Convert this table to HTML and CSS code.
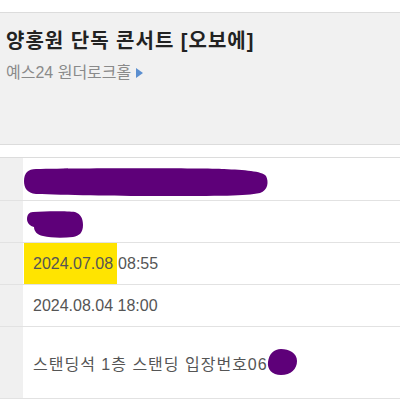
FILE: index.html
```html
<!DOCTYPE html>
<html lang="ko">
<head>
<meta charset="utf-8">
<link rel="stylesheet" href="styles.css">
</head>
<body>
<section class="summary">
  <h1 class="title">양홍원 단독 콘서트 [오보에]</h1>
  <p class="venue">예스24 원더로크홀<svg class="arrow" width="7" height="10" viewBox="0 0 7 10"><path d="M0 0 L7 5 L0 10 Z" fill="#5b8fd0"/></svg></p>
</section>
<div class="table">
  <div class="row r1">
    <div class="th"></div>
    <div class="td"><svg class="blob b1" width="245" height="29" viewBox="0 0 245 29"><path d="M12 1 C60 0 180 0 200 1 C220 2 238 3 242 8 C245 14 244 22 236 25 C220 28 200 28 130 28 C90 28 40 27 12 26 C3 25 0 20 0 13 C0 5 4 1 12 1 Z" fill="#5e0079"/></svg></div>
  </div>
  <div class="row">
    <div class="th"></div>
    <div class="td"><svg class="blob b2" width="57" height="27" viewBox="0 0 57 27"><path d="M6 1 C20 0 40 0 48 1 C54 3 56 8 56 14 C56 22 52 25 46 26 C36 27 24 27 16 25 C10 24 7 20 7 16 C3 15 0 12 0 8 C0 4 2 1 6 1 Z" fill="#5e0079"/></svg></div>
  </div>
  <div class="row">
    <div class="th"></div>
    <div class="td"><span class="mark">2024.07.08</span><span class="time">08:55</span></div>
  </div>
  <div class="row">
    <div class="th"></div>
    <div class="td">2024.08.04 18:00</div>
  </div>
  <div class="row tall">
    <div class="th"></div>
    <div class="td"><span class="seat">스탠딩석 1층 스탠딩 입장번호06</span><svg class="blob b3" width="31" height="27" viewBox="0 0 31 27"><path d="M14 0 C22 0 30 4 30 12 C30 20 24 26 14 26 C5 26 0 20 1 13 C2 5 7 0 14 0 Z" fill="#5e0079"/></svg></div>
  </div>
</div>
</body>
</html>
```

FILE: styles.css
```css
html, body {
  margin: 0;
  padding: 0;
  background: #fff;
}
body {
  font-family: "Liberation Sans", "Noto Sans CJK KR", sans-serif;
  color: #555;
}
.summary {
  margin-top: 12px;
  height: 115px;
  background: #f1f1f1;
  border-top: 1px solid #dcdcdc;
  border-bottom: 1px solid #dcdcdc;
  padding: 16px 6px 0;
}
.title {
  margin: 0;
  font-size: 20px;
  line-height: 24px;
  font-weight: bold;
  color: #222;
  letter-spacing: 1px;
}
.venue {
  margin: 10px 0 0;
  font-size: 16px;
  line-height: 20px;
  color: #8a8a8a;
  display: flex;
  align-items: center;
}
.arrow {
  margin-left: 5px;
}
.table {
  margin-top: 12px;
  border-top: 1px solid #dcdcdc;
}
.row {
  display: flex;
  height: 41px;
  border-bottom: 1px solid #e2e2e2;
}
.row.r1 {
  height: 42px;
}
.row.tall {
  height: 71px;
}
.th {
  width: 23px;
  flex: none;
  background: #f0f0f0;
}
.td {
  flex: 1;
  display: flex;
  align-items: center;
  padding-left: 10px;
  font-size: 16px;
  color: #555;
  white-space: nowrap;
}
.mark {
  align-self: stretch;
  display: flex;
  align-items: center;
  background: #ffe400;
  margin-left: -9px;
  padding: 0 4px 0 9px;
}
.time {
  margin-left: 1px;
}
.seat {
  letter-spacing: 1px;
}
.b1 {
  margin-left: -9px;
  margin-top: 6px;
}
.b2 {
  margin-left: -6px;
  margin-top: 5px;
}
.b3 {
  margin-left: -1px;
  margin-top: 0;
}
```
